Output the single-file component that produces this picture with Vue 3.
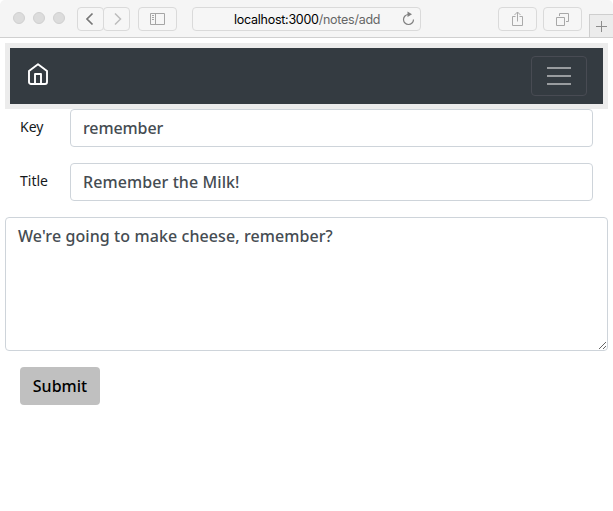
<script setup>
import { ref } from 'vue'

const noteKey = ref('remember')
const title = ref('Remember the Milk!')
const body = ref("We're going to make cheese, remember?")
</script>

<template>
  <div class="window">
    <header class="toolbar">
      <div class="lights"><i></i><i></i><i></i></div>
      <div class="history">
        <button class="tool back" aria-label="Back">
          <svg width="26" height="24" viewBox="0 0 26 24"><path d="M14.500 6.500 9 12l5.500 5.500" stroke="#777" stroke-width="1.7" /></svg>
        </button>
        <button class="tool forward" aria-label="Forward">
          <svg width="26" height="24" viewBox="0 0 26 24"><path d="M11 6.500 16.500 12 11 17.500" stroke="#bcbcbc" stroke-width="1.5" /></svg>
        </button>
      </div>
      <button class="tool sidebar" aria-label="Sidebar">
        <svg width="15" height="12" viewBox="0 0 15 12"><path d="M.5.5h14v11H.5zM5.500.5v11M2 2.500h2M2 4.500h2M2 6.500h2" stroke="#a5a5a5" /></svg>
      </button>
      <div class="address">
        <span class="url">localhost:3000<span class="path">/notes/add</span></span>
        <svg class="reload" width="14" height="16" viewBox="0 0 14 16">
          <path d="M7.500 3.500A5 5 0 1 0 12.500 8.500" stroke="#808080" stroke-width="1.2" />
          <path d="M6.500.5v5.500l4.500-2.750z" fill="#808080" />
        </svg>
      </div>
      <button class="tool share" aria-label="Share">
        <svg width="11" height="16" viewBox="0 0 11 16"><path d="M3.500 5.500h-3v9h10v-9h-3M5.500 10.500V1M2.500 4l3-3 3 3" stroke="#aaa" /></svg>
      </button>
      <button class="tool tabs" aria-label="Tabs">
        <svg width="13" height="13" viewBox="0 0 13 13"><path d="M.5 4.500h8v8h-8zM3.500 3V.5h9v8H10" stroke="#a8a8a8" /></svg>
      </button>
      <button class="new-tab" aria-label="New tab">
        <svg width="11" height="11" viewBox="0 0 11 11"><path d="M5.500 0v11M0 5.500h11" stroke="#8c8c8c" /></svg>
      </button>
    </header>

    <main>
      <div class="nav-frame">
        <nav>
          <a class="home" aria-label="Home">
            <svg width="20" height="22" viewBox="0 0 20 22">
              <path d="M1 8 10 1.200 19 8v11a2 2 0 0 1-2 2H3a2 2 0 0 1-2-2zM7 21V11h6v10" stroke="#fff" stroke-width="1.9" stroke-linejoin="round" />
            </svg>
          </a>
          <button class="menu" aria-label="Menu"><i></i><i></i><i></i></button>
        </nav>
      </div>
      <form @submit.prevent>
        <div class="row">
          <label for="key">Key</label>
          <input id="key" v-model="noteKey" class="control key">
        </div>
        <div class="row">
          <label for="title">Title</label>
          <input id="title" v-model="title" class="control">
        </div>
        <textarea v-model="body" class="control" spellcheck="false"></textarea>
        <button class="submit" type="submit">Submit</button>
      </form>
    </main>
  </div>
</template>

<style>
body { margin: 0; background: #fff; overflow: hidden; }
</style>

<style scoped>
* { box-sizing: border-box; }
svg { display: block; fill: none; flex: none; }
button { padding: 0; font: inherit; }
.window { height: 511px; background: #fff; font-family: "Noto Sans", "Open Sans", sans-serif; border-radius: 5px; overflow: hidden; }
.toolbar { height: 38px; display: flex; align-items: flex-start; padding: 7px 0 0 13px; background: #f5f5f5; border-bottom: 1px solid #d0d0d0; }
.lights { display: flex; gap: 8px; width: 64px; padding-top: 5px; }
.lights i { width: 12px; height: 12px; border: 1px solid #d0d0d0; border-radius: 50%; background: #dcdcdc; }
.history { display: flex; width: 53px; }
.tool { height: 24px; display: flex; align-items: center; justify-content: center; border: 1px solid #dadada; border-radius: 4px; background: #f6f6f6; flex: none; }
.back, .forward { width: 27px; }
.forward { margin-left: -1px; }
.sidebar { width: 39px; margin-left: 8px; }
.address { width: 229px; height: 24px; margin-left: 15px; display: flex; align-items: center; justify-content: space-between; padding: 0 5px 0 41px; border: 1px solid #dadada; border-radius: 4px; background: #f6f6f6; }
.url { padding-top: 1px; font: 12.5px/22px Inter, sans-serif; letter-spacing: -0.26px; color: #000; white-space: nowrap; }
.path { color: #666; }
.share { width: 39px; margin-left: 77px; }
.tabs { width: 39px; margin-left: 6px; }
.new-tab { width: 24px; height: 23px; margin: 7px 0 0 7px; flex: none; display: flex; align-items: center; justify-content: center; border: 1px solid #cecece; border-width: 1px 0 0 1px; background: #ececec; }
main { padding: 5px 5px 0; }
.nav-frame { padding: 5px; background: #ececec; }
nav { height: 56px; padding: 0 16px; display: flex; align-items: center; justify-content: space-between; background: #343b41; }
.home { margin: -4px 0 0 2px; }
.menu { width: 56px; height: 40px; display: flex; flex-direction: column; align-items: center; justify-content: center; gap: 6px; border: 1px solid #484b53; border-radius: 4px; background: transparent; }
.menu i { width: 24px; height: 2px; background: #999c9f; }
form { display: flex; flex-direction: column; }
.row { display: flex; padding: 0 15px; margin-bottom: 16px; }
label { width: 50px; padding-top: 8px; font-size: 14px; font-weight: 450; line-height: 20px; color: #15191c; }
.control { display: block; min-width: 0; margin: 0; padding: 6px 12px; border: 1px solid #ced4da; border-radius: 4px; outline: none; background: #fff; color: #454c52; font: 470 16px/24px "Noto Sans", "Open Sans", sans-serif; letter-spacing: 0.09px; }
.row .control { flex: 1; height: 38px; }
.row .key { letter-spacing: -0.1px; }
textarea.control { width: 603px; height: 134px; resize: both; overflow: auto; }
.submit { width: 80px; height: 38px; margin: 16px 0 0 15px; border: 0; border-radius: 4px; background: #c0c0c0; color: #000; font-size: 16px; font-weight: 470; }
</style>
